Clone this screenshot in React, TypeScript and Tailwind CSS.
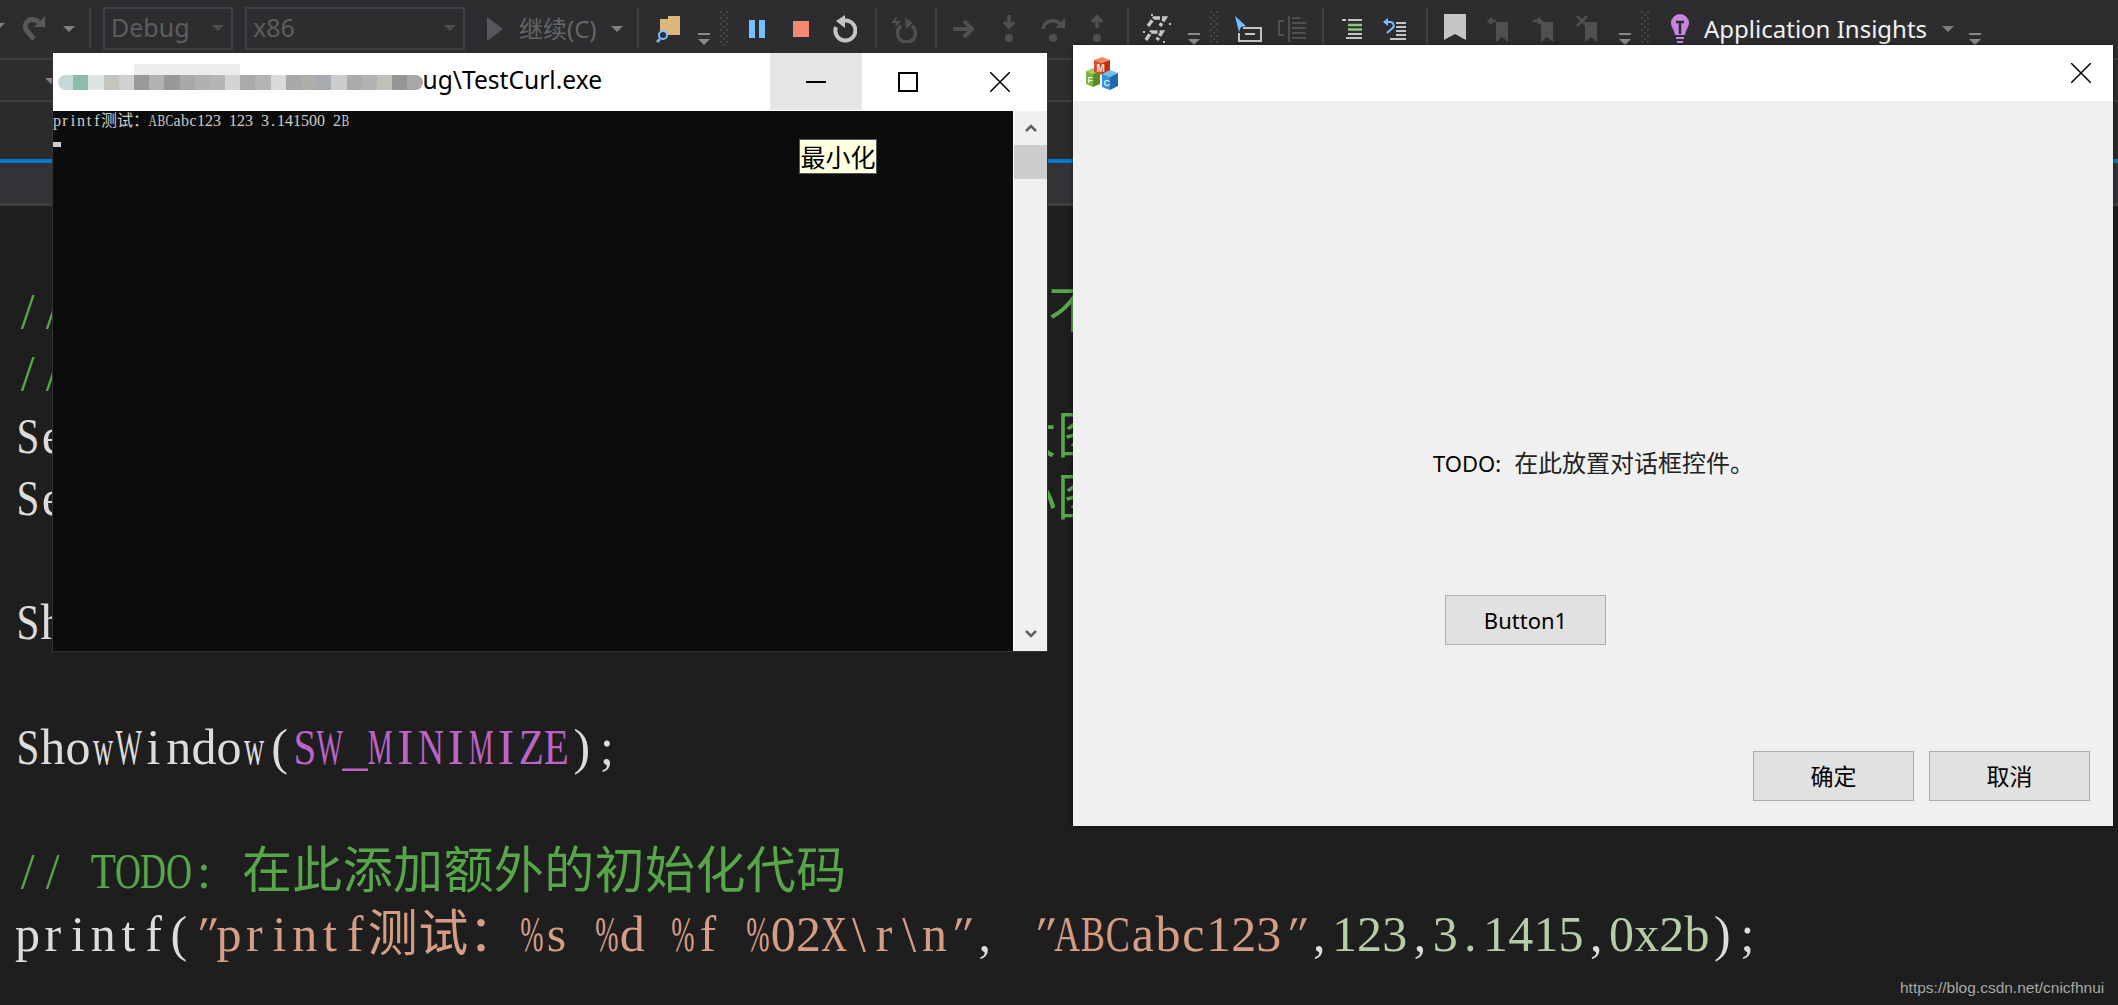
import React from 'react';
import clsx from 'clsx';

const GREEN = 'text-[#57a64a]';
const GREEN_TABBED = 'text-[#57a64a] ml-[9px]';
const PLAIN = 'text-[#dcdcdc]';
const PURPLE = 'text-[#bd63c5]';
const STRING = 'text-[#d69d85]';
const STRING_SPACED = 'text-[#d69d85] ml-[7px]';
const NUM = 'text-[#b5cea8]';

const VERY_WIDE = 'MWmw%@';
const WIDE = 'ABCDGHKNOQRUVXY';
const SLIGHTLY_WIDE = 'EFLPSTZ';
const SERIF = "[font-family:'Liberation_Serif','Noto_Sans_CJK_SC',serif]";

// fixed cells, the real font is a half/full width one
const Cells = ({ text, half, full, className }: { text: string; half: string; full: string; className?: string }) => (
  <span className={clsx('whitespace-pre', className)}>
    {[...text].map((ch, i) => {
      const cjk = ch.charCodeAt(0) > 0x2e80;
      return (
        <span key={i} className={clsx('inline-flex justify-center', cjk ? full : half)}>
          <span
            className={clsx(
              'inline-block shrink-0',
              VERY_WIDE.includes(ch) && 'scale-x-[0.56]',
              WIDE.includes(ch) && 'scale-x-[0.72]',
              SLIGHTLY_WIDE.includes(ch) && 'scale-x-[0.82]',
              ch === '"' && 'skew-x-[-20deg]'
            )}
          >
            {ch}
          </span>
        </span>
      );
    })}
  </span>
);

const lines: [string, string][][] = [
  [['// 设置此对话框的图标。  当应用程序主窗口不是对话框时，框架将自动', GREEN]],
  [['//  执行此操作', GREEN]],
  [['SetIcon(m_hIcon, TRUE);         ', PLAIN], ['// 设置大图标', GREEN_TABBED]],
  [['SetIcon(m_hIcon, FALSE);        ', PLAIN], ['// 设置小图标', GREEN_TABBED]],
  [],
  [['ShowWindow(SW_SHOW);', PLAIN]],
  [],
  [['ShowWindow(', PLAIN], ['SW_MINIMIZE', PURPLE], [');', PLAIN]],
  [],
  [['// TODO: 在此添加额外的初始化代码', GREEN]],
  [
    ['printf(', PLAIN],
    ['"printf测试：%s %d %f %02X\\r\\n"', STRING],
    [', ', PLAIN],
    ['"ABCabc123"', STRING_SPACED],
    [',', PLAIN],
    ['123', NUM],
    [',', PLAIN],
    ['3.1415', NUM],
    [',', PLAIN],
    ['0x2b', NUM],
    [');', PLAIN],
  ],
];

const Caret = ({ className, fill = '#808083' }: { className?: string; fill?: string }) => (
  <svg width="12" height="6" viewBox="0 0 12 6" className={clsx('shrink-0', className)}>
    <path d="M0 0h12L6 6z" fill={fill} />
  </svg>
);

const Sep = ({ ml }: { ml: string }) => <div className={clsx('w-[2px] h-[40px] bg-[#414144] shrink-0 self-start mt-[8px]', ml)} />;

const Drop = ({ ml }: { ml: string }) => (
  <div className={clsx('w-[12px] shrink-0 self-start mt-[33px] flex flex-col gap-[4px]', ml)}>
    <div className="h-[2px] bg-[#8a8a8c]" />
    <svg width="12" height="6" viewBox="0 0 12 6">
      <path d="M0 0h12L6 6z" fill="#8a8a8c" />
    </svg>
  </div>
);

const Grip = ({ ml }: { ml: string }) => (
  <svg width="10" height="36" viewBox="0 0 10 36" className={clsx('shrink-0 self-start mt-[10px]', ml)}>
    {[0, 1, 2, 3, 4, 5].map(i => (
      <g key={i} fill="#46464a">
        <rect x="0" y={i * 6 + 1} width="2" height="2" />
        <rect x="6" y={i * 6 + 1} width="2" height="2" />
        <rect x="3" y={i * 6 + 4} width="2" height="2" />
      </g>
    ))}
  </svg>
);

const Bookmark = ({ d }: { d: string }) => (
  <svg width="25" height="28" viewBox="0 0 25 28" className="shrink-0 mt-[-1px]">
    <path d="M9 7h12v20l-6-5-6 5z" fill="#505052" />
    <path d={d} fill="none" stroke="#505052" strokeWidth="2.5" />
  </svg>
);

const Toolbar = () => (
  <div className="h-[58px] bg-[#2d2d30] flex items-center shrink-0 text-[25px] [font-family:'Noto_Sans','Noto_Sans_CJK_SC',sans-serif]">
    <Caret className="ml-[-7px] mt-[-6px]" />
    <svg width="26" height="28" viewBox="0 0 26 28" className="ml-[15px] shrink-0 mt-[-3px]">
      <path d="M14 25 7 17a7 7 0 0 1 8-11l4 2" fill="none" stroke="#59595b" strokeWidth="5" />
      <path d="M25 2v11H14z" fill="#59595b" />
    </svg>
    <Caret className="ml-[17px]" />
    <Sep ml="ml-[14px]" />
    <div className="ml-[12px] w-[130px] h-[43px] mt-[-2px] border-2 border-[#3f3f46] flex items-center justify-between pl-[6px] pr-[7px] text-[#5d5d5f] shrink-0">
      <span>Debug</span>
      <Caret fill="#4d4d50" />
    </div>
    <div className="ml-[12px] w-[220px] h-[43px] mt-[-2px] border-2 border-[#3f3f46] flex items-center justify-between pl-[6px] pr-[7px] text-[#5d5d5f] shrink-0">
      <span>x86</span>
      <Caret fill="#4d4d50" />
    </div>
    <svg width="16" height="24" viewBox="0 0 16 24" className="ml-[22px] shrink-0">
      <path d="M0 0l16 12L0 24z" fill="#56575a" />
    </svg>
    <span className="ml-[16px] w-[80px] shrink-0 text-[#666668] text-[24px] whitespace-nowrap">继续(C)</span>
    <Caret className="ml-[12px]" />
    <Sep ml="ml-[14px]" />
    <svg width="26" height="28" viewBox="0 0 26 28" className="ml-[17px] shrink-0">
      <path d="M4 4h8V1h12v19H4z" fill="#dcb67a" />
      <circle cx="7" cy="20" r="4" fill="#2d2d30" stroke="#75beff" strokeWidth="2" />
      <path d="M4 24l-3 3" stroke="#75beff" strokeWidth="2.5" />
    </svg>
    <Drop ml="ml-[16px]" />
    <Grip ml="ml-[10px]" />
    <div className="ml-[19px] w-[16px] h-[18px] flex justify-between shrink-0">
      <div className="w-[6px] bg-[#75beff]" />
      <div className="w-[6px] bg-[#75beff]" />
    </div>
    <div className="ml-[28px] w-[16px] h-[16px] bg-[#f48771] shrink-0" />
    <svg width="24" height="28" viewBox="0 0 24 28" className="ml-[24px] shrink-0">
      <path d="M8 6.5A10 10 0 1 1 3 12" fill="none" stroke="#c5c5c5" strokeWidth="4" />
      <path d="M12 0v13L3 6z" fill="#c5c5c5" />
    </svg>
    <Sep ml="ml-[18px]" />
    <svg width="26" height="28" viewBox="0 0 26 28" className="ml-[14px] shrink-0">
      <path d="M10 11a9 9 0 1 0 11 0" fill="none" stroke="#505052" strokeWidth="3.5" />
      <path d="M14 3l8 5-7 6z" fill="#505052" />
      <path d="M6 1 0 8h5l-1 5 6-7H5z" fill="#505052" />
    </svg>
    <Sep ml="ml-[18px]" />
    <svg width="22" height="18" viewBox="0 0 22 18" className="ml-[16px] shrink-0">
      <path d="M0 9h18M11 1l8 8-8 8" fill="none" stroke="#505052" strokeWidth="4" />
    </svg>
    <svg width="12" height="28" viewBox="0 0 12 28" className="ml-[28px] shrink-0">
      <path d="M6 0v11M1 7l5 5 5-5" fill="none" stroke="#505052" strokeWidth="3.5" />
      <circle cx="6" cy="23" r="4" fill="#505052" />
    </svg>
    <svg width="24" height="28" viewBox="0 0 24 28" className="ml-[26px] shrink-0">
      <path d="M2 14a10 10 0 0 1 18-4" fill="none" stroke="#505052" strokeWidth="3.5" />
      <path d="M24 3v10H14z" fill="#505052" />
      <circle cx="12" cy="23" r="4" fill="#505052" />
    </svg>
    <svg width="12" height="28" viewBox="0 0 12 28" className="ml-[26px] shrink-0">
      <path d="M6 13V2M1 7l5-5 5 5" fill="none" stroke="#505052" strokeWidth="3.5" />
      <circle cx="6" cy="23" r="4" fill="#505052" />
    </svg>
    <Sep ml="ml-[24px]" />
    <svg width="28" height="30" viewBox="0 0 28 30" className="ml-[14px] shrink-0">
      <g fill="none" stroke="#c5c5c5" strokeWidth="3.5" strokeDasharray="7 2">
        <path d="M5 12 11 4h11l-5 8" />
        <path d="M3 26l5-8h11l-5 8" />
      </g>
      <g fill="#c5c5c5">
        <rect x="8" y="0" width="2" height="2" />
        <rect x="26" y="9" width="2" height="2" />
        <rect x="0" y="17" width="2" height="2" />
        <rect x="20" y="27" width="2" height="2" />
      </g>
    </svg>
    <Drop ml="ml-[17px]" />
    <Grip ml="ml-[10px]" />
    <svg width="27" height="26" viewBox="0 0 27 26" className="ml-[15px] shrink-0">
      <path d="M8 12h18v13H4V17" fill="none" stroke="#c5c5c5" strokeWidth="2" />
      <path d="M10 18h10" stroke="#c5c5c5" strokeWidth="2" />
      <path d="M0 0l11 10-5 1-2 5z" fill="#75beff" />
    </svg>
    <svg width="28" height="28" viewBox="0 0 28 28" className="ml-[16px] shrink-0">
      <path d="M6 6H1v14h5M11 1v26" fill="none" stroke="#505052" strokeWidth="2" />
      <path d="M14 3h8M14 8h14M14 13h14M14 18h14M14 23h14" stroke="#505052" strokeWidth="2" />
    </svg>
    <Sep ml="ml-[16px]" />
    <svg width="20" height="20" viewBox="0 0 20 20" className="ml-[18px] shrink-0">
      <path d="M0 1h4" stroke="#c5c5c5" strokeWidth="2" />
      <path d="M6 1h14M4 19h16M6 15h14" stroke="#c5c5c5" strokeWidth="2" />
      <path d="M6 6h14M6 10.500h14" stroke="#8dc97f" strokeWidth="2.5" />
    </svg>
    <svg width="24" height="24" viewBox="0 0 24 24" className="ml-[20px] shrink-0">
      <path d="M1 5 6 1v8z" fill="#75beff" />
      <path d="M5 5h3a3.500 3.500 0 0 1 2 6.500L5 16" fill="none" stroke="#75beff" strokeWidth="2" />
      <path d="M14 6h10M14 10h10M14 14h10M14 18h10M8 22h16" stroke="#c5c5c5" strokeWidth="2" />
    </svg>
    <Sep ml="ml-[20px]" />
    <svg width="22" height="27" viewBox="0 0 22 27" className="ml-[16px] shrink-0 mt-[-3px]">
      <path d="M0 0h22v26l-11-6-11 6z" fill="#c5c5c5" />
    </svg>
    <div className="ml-[21px] shrink-0">
      <Bookmark d="M9 6H2l3-3M2 6l3 3" />
    </div>
    <div className="ml-[20px] shrink-0">
      <Bookmark d="M1 6h8L6 3m3 3-3 3" />
    </div>
    <div className="ml-[19px] shrink-0">
      <Bookmark d="M1 1l10 10M11 1 1 11" />
    </div>
    <Drop ml="ml-[18px]" />
    <Grip ml="ml-[10px]" />
    <svg width="18" height="30" viewBox="0 0 18 30" className="ml-[20px] shrink-0">
      <path d="M9 0a9 9 0 0 1 9 9c0 4-3 6-4 12H4C3 15 0 13 0 9a9 9 0 0 1 9-9z" fill="#c586e0" />
      <path d="M5 8h8M9 8v12" stroke="#2d2d30" strokeWidth="2.500" />
      <path d="M5 24h8M6 28h6" stroke="#c586e0" strokeWidth="2" />
    </svg>
    <span className="ml-[15px] w-[225px] shrink-0 whitespace-nowrap text-[24px] text-[#f1f1f1]">Application Insights</span>
    <Caret className="ml-[13px]" />
    <Drop ml="ml-[15px]" />
  </div>
);

const MOSAIC = ['#c5d9d9', '#8fbcaa', '#dce5e2', '#c5c5c0', '#d0d0d0', '#9a9a9a', '#b0b2b0', '#98989a', '#a8a8a6', '#b0b0ae', '#b4b6b6', '#d4d4d6', '#aaaaaa', '#b4b4b2', '#d8dadc', '#a9a9a9', '#b0aea8', '#a8aab2', '#cccccf', '#ababab', '#b2b2b2', '#c0c0b8', '#969696', '#aaa8a6'];

const ConsoleWindow = () => (
  <div className="absolute left-[52px] top-[53px] w-[996px] h-[599px] flex flex-col bg-white border-x border-b border-[#333335]">
    <div className="h-[58px] flex shrink-0 relative">
      <div className="ml-[5px] mt-[22px] h-[15px] flex overflow-hidden rounded-full self-start relative">
        {MOSAIC.map(c => (
          <div key={c} className="w-[15.2px] h-[15px]" style={{ backgroundColor: c }} />
        ))}
      </div>
      <span className="absolute left-[81px] top-[11px] w-[106px] h-[11px] bg-[#ececec]" />
      <span className="mt-[9px] text-[24.6px] text-black [font-family:'Noto_Sans',sans-serif] whitespace-nowrap">ug\TestCurl.exe</span>
      <div className="ml-auto flex h-[57px] mr-[1px]">
        <div className="w-[92px] bg-[#e5e5e5] flex items-center justify-center">
          <div className="w-[20px] h-[2px] bg-black" />
        </div>
        <div className="w-[92px] flex items-center justify-center">
          <div className="w-[20px] h-[20px] border-2 border-black" />
        </div>
        <div className="w-[92px] flex items-center justify-center">
          <svg width="20" height="20" viewBox="0 0 20 20">
            <path d="M0 0l20 20M20 0 0 20" stroke="#000" strokeWidth="1.500" />
          </svg>
        </div>
      </div>
    </div>
    <div className="flex-1 flex min-h-0">
      <div className="w-[960px] bg-[#0c0c0c] relative">
        <div className={clsx('text-[16px] leading-[20px] text-[#cccccc]', SERIF)}>
          <Cells text="printf测试：ABCabc123 123 3.141500 2B" half="w-[8px]" full="w-[16px]" />
        </div>
        <div className="w-[8px] h-[5px] bg-[#cccccc] mt-[11px]" />
        <div className="absolute left-[746px] top-[28px] w-[78px] h-[35px] bg-[#ffffe1] border border-[#555555] flex items-center justify-center text-[25px] leading-none text-black [font-family:'Noto_Sans_CJK_SC',sans-serif] whitespace-nowrap">
          最小化
        </div>
      </div>
      <div className="w-[33px] ml-[1px] bg-[#f0f0f0] flex flex-col">
        <div className="h-[34px] flex items-center justify-center">
          <svg width="12" height="8" viewBox="0 0 12 8">
            <path d="M1 7l5-5 5 5" fill="none" stroke="#606060" strokeWidth="2.500" />
          </svg>
        </div>
        <div className="h-[34px] bg-[#cdcdcd]" />
        <div className="mt-auto h-[34px] flex items-center justify-center">
          <svg width="12" height="8" viewBox="0 0 12 8">
            <path d="M1 1l5 5 5-5" fill="none" stroke="#606060" strokeWidth="2.500" />
          </svg>
        </div>
      </div>
    </div>
  </div>
);

const DialogButton = ({ label, className }: { label: string; className?: string }) => (
  <div className={clsx('w-[161px] h-[50px] bg-[#e1e1e1] border border-[#adadad] flex items-center justify-center shrink-0 text-black', className)}>
    {label}
  </div>
);

const MfcCubes = () => (
  <svg width="32" height="33" viewBox="0 0 32 33" className="mt-[1px]">
    <path d="M0 14l7-3 7 3-7 3z" fill="#a6cf5e" />
    <path d="M0 14l7 3v13l-7-3z" fill="#7fb13c" />
    <path d="M7 17l7-3v13l-7 3z" fill="#5a8c2a" />
    <path d="M8 3l8-3 8 3-8 3z" fill="#f08a5c" />
    <path d="M8 3l8 3v12l-8-3z" fill="#dc4c2c" />
    <path d="M16 6l8-3v12l-8 3z" fill="#b93318" />
    <path d="M16 17l8-4 8 3-8 4z" fill="#6fbde8" />
    <path d="M16 17l8 3v13l-8-3z" fill="#3590d2" />
    <path d="M24 20l8-4v13l-8 4z" fill="#1f6cab" />
    <text x="10.500" y="15" fontSize="10" fontWeight="700" fill="#ffe3dc" fontFamily="Liberation Sans">M</text>
    <text x="1.500" y="26" fontSize="9" fontWeight="700" fill="#eef7d8" fontFamily="Liberation Sans">F</text>
    <text x="17.500" y="29" fontSize="9" fontWeight="700" fill="#dff0fb" fontFamily="Liberation Sans">C</text>
  </svg>
);

const DialogWindow = () => (
  <div className="absolute left-[1073px] top-[45px] w-[1040px] h-[781px] flex flex-col bg-[#f0f0f0] shadow-[0_0_4px_rgba(0,0,0,0.5)] [font-family:'Noto_Sans','Noto_Sans_CJK_SC',sans-serif]">
    <div className="h-[56px] bg-white flex items-center justify-between pl-[13px] pr-[22px] shrink-0">
      <MfcCubes />
      <svg width="20" height="20" viewBox="0 0 20 20">
        <path d="M0 0l20 20M20 0 0 20" stroke="#000" strokeWidth="1.500" />
      </svg>
    </div>
    <div className="flex-1 flex flex-col">
      <div className="ml-[360px] mt-[347px] text-[22px] leading-[30px] text-black whitespace-nowrap">
        TODO:<span className="ml-[13px] text-[24px] text-[#222222]">在此放置对话框控件。</span>
      </div>
      <DialogButton label="Button1" className="ml-[372px] mt-[117px] text-[22px]" />
      <div className="flex gap-[15px] justify-end mr-[23px] mt-auto mb-[25px]">
        <DialogButton label="确定" className="text-[23px] text-[#222222]" />
        <DialogButton label="取消" className="text-[23px] text-[#222222]" />
      </div>
    </div>
  </div>
);

export default function App() {
  return (
    <div className="relative w-[2118px] h-[1005px] overflow-hidden bg-[#1e1e1e] flex flex-col">
      <Toolbar />
      <div className="h-[2px] bg-[#3f3f42] shrink-0" />
      <div className="h-[40px] bg-[#2d2d30] shrink-0 pl-[45px] pt-[18px]">
        <Caret />
      </div>
      <div className="h-[2px] bg-[#3f3f42] shrink-0" />
      <div className="h-[57px] bg-[#2b2b2e] shrink-0" />
      <div className="h-[4px] bg-[#007acc] shrink-0" />
      <div className="h-[40px] bg-[#333337] shrink-0" />
      <div className="h-[3px] bg-[#3f3f42] shrink-0" />
      <div className={clsx('flex-1 pl-[15px] pt-[74px] text-[50px]', SERIF)}>
        {lines.map((segs, i) => (
          <div key={i} className="h-[62.25px] leading-[62.25px] whitespace-nowrap">
            {segs.map(([t, c], j) => (
              <Cells key={j} text={t} half="w-[25.2px]" full="w-[50.4px]" className={c} />
            ))}
          </div>
        ))}
      </div>
      <div className="absolute left-[1900px] top-[976px] text-[15.500px] text-[#a8a8a8] [font-family:'Liberation_Sans',sans-serif]">
        https://blog.csdn.net/cnicfhnui
      </div>
      <ConsoleWindow />
      <DialogWindow />
    </div>
  );
}
